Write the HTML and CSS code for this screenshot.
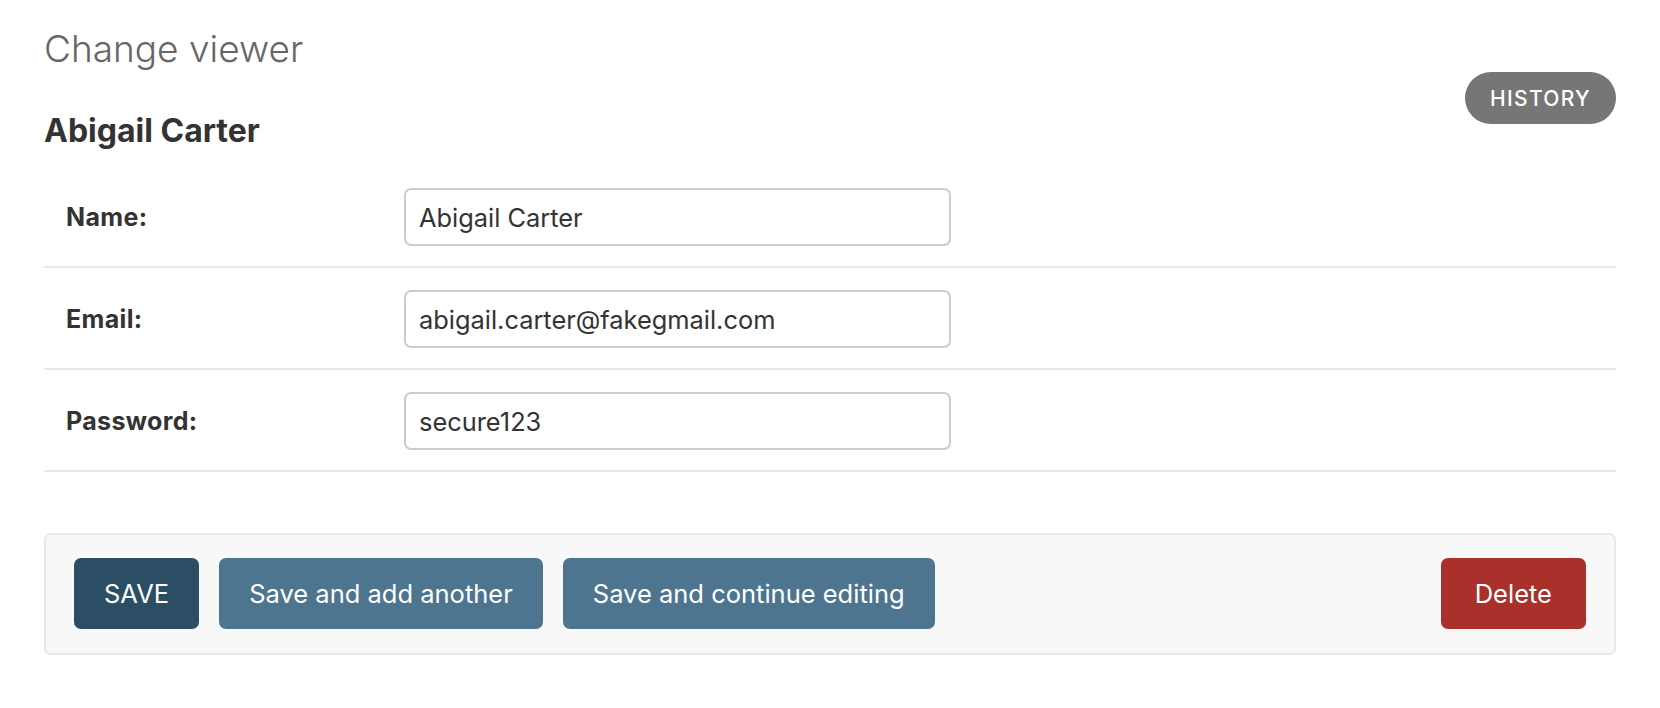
FILE: index.html
```html
<!DOCTYPE html>
<html lang="en">
<head>
<meta charset="utf-8">
<title>Change viewer</title>
<link rel="stylesheet" href="styles.css">
</head>
<body>
<div class="content">
  <h1 class="title">Change viewer</h1>
  <div class="subhead">
    <h2 class="subtitle">Abigail Carter</h2>
    <a class="history" href="#">History</a>
  </div>
  <form class="form">
    <div class="fieldset">
      <div class="form-row">
        <label class="label" for="id_name">Name:</label>
        <input class="input" id="id_name" type="text" value="Abigail Carter">
      </div>
      <div class="form-row">
        <label class="label" for="id_email">Email:</label>
        <input class="input" id="id_email" type="text" value="abigail.carter@fakegmail.com">
      </div>
      <div class="form-row">
        <label class="label" for="id_password">Password:</label>
        <input class="input" id="id_password" type="text" value="secure123">
      </div>
    </div>
    <div class="submit-row">
      <button class="btn btn-default" type="button">SAVE</button>
      <button class="btn" type="button">Save and add another</button>
      <button class="btn" type="button">Save and continue editing</button>
      <span class="spacer"></span>
      <button class="btn btn-delete" type="button">Delete</button>
    </div>
  </form>
</div>
</body>
</html>
```

FILE: styles.css
```css
* { box-sizing: border-box; }
html, body { margin: 0; padding: 0; background: #fff; }
body {
  font-family: Inter, "Noto Sans", "Liberation Sans", sans-serif;
  color: #333;
}
.content {
  padding: 27px 44px 0 44px;
}
.title {
  margin: 0;
  font-size: 37px;
  line-height: 44px;
  font-weight: 300;
  color: #666;
}
.subhead {
  display: flex;
  justify-content: space-between;
  align-items: flex-start;
}
.subtitle {
  margin: 41px 0 0 0;
  font-size: 32px;
  line-height: 38px;
  font-weight: 700;
  color: #333;
}
.history {
  margin-top: 1px;
  height: 52px;
  padding: 0 25px;
  display: flex;
  align-items: center;
  border-radius: 26px;
  background: #767676;
  color: #fff;
  text-decoration: none;
  text-transform: uppercase;
  font-size: 21px;
  font-weight: 500;
  letter-spacing: 1.3px;
}
.form { margin-top: 16px; }
.form-row {
  display: flex;
  align-items: center;
  padding: 22px 0 20px 22px;
  border-bottom: 2px solid #e8e8e8;
}
.label {
  width: 338px;
  font-size: 25px;
  font-weight: 700;
  letter-spacing: 0.35px;
  color: #333;
}
.input {
  width: 547px;
  height: 58px;
  padding: 0 13px;
  border: 2px solid #cccccc;
  border-radius: 7px;
  font-family: inherit;
  font-size: 25.4px;
  color: #333;
  background: #fff;
  outline: none;
}
.submit-row {
  margin-top: 61px;
  display: flex;
  align-items: center;
  gap: 20px;
  padding: 23px 28px 24px 28px;
  background: #f8f8f8;
  border: 2px solid #e8e8e8;
  border-radius: 7px;
}
.spacer { flex: 1; }
.btn {
  height: 71px;
  padding: 0 30px;
  border: none;
  border-radius: 7px;
  background: #4e7590;
  color: #fff;
  font-family: inherit;
  font-size: 25.5px;
  font-weight: 400;
  cursor: pointer;
}
.btn-default { background: #2b4e65; }
.btn-delete { background: #a9302b; padding: 0 34px; }
```
